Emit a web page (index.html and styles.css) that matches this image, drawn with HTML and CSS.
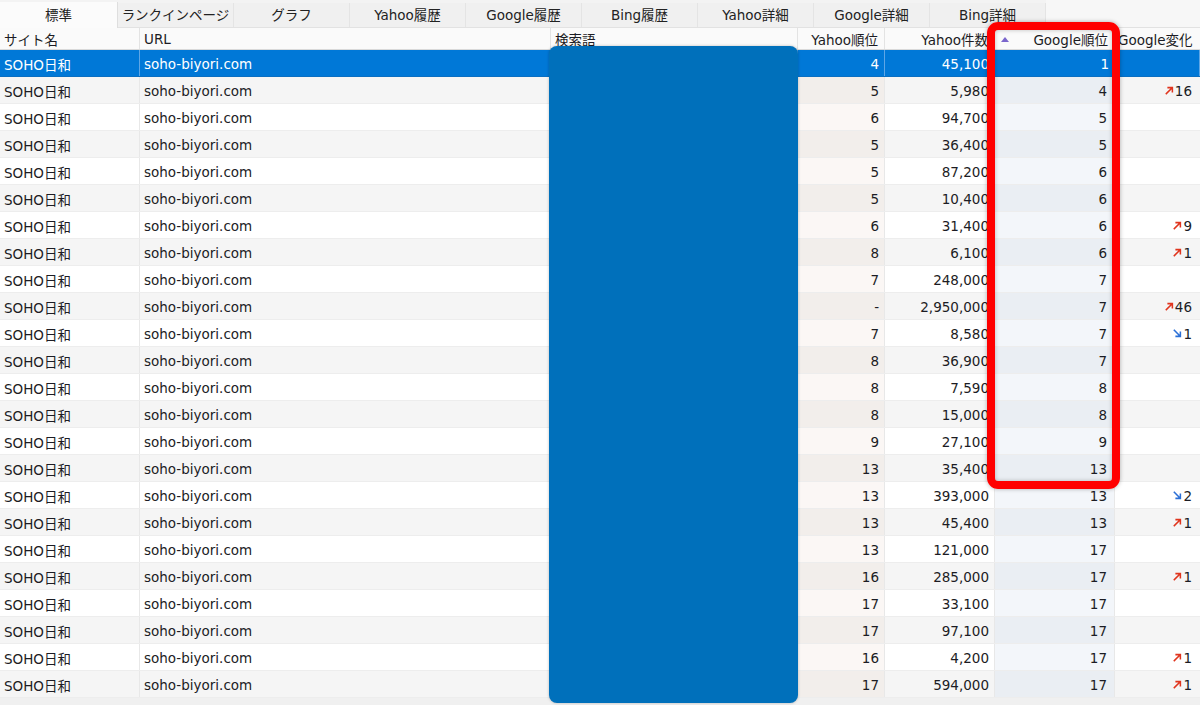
FILE: index.html
```html
<!DOCTYPE html>
<html lang="ja">
<head>
<meta charset="utf-8">
<title>ランキング</title>
<link rel="stylesheet" href="styles.css">
</head>
<body>
<div class="app">
  <div class="tabs">
    <div class="tab active">標準</div>
    <div class="tab">ランクインページ</div>
    <div class="tab">グラフ</div>
    <div class="tab">Yahoo履歴</div>
    <div class="tab">Google履歴</div>
    <div class="tab">Bing履歴</div>
    <div class="tab">Yahoo詳細</div>
    <div class="tab">Google詳細</div>
    <div class="tab">Bing詳細</div>
    <div class="tab-rest"></div>
  </div>
  <div class="grid">
    <div class="row head">
      <div class="c">サイト名</div>
      <div class="c">URL</div>
      <div class="c">検索語</div>
      <div class="c r">Yahoo順位</div>
      <div class="c r">Yahoo件数</div>
      <div class="c r sort"><span class="tri"></span><span>Google順位</span></div>
      <div class="c">Google変化</div>
    </div>
    <div class="row sel"><div class="c">SOHO日和</div><div class="c">soho-biyori.com</div><div class="c"></div><div class="c r">4</div><div class="c r">45,100</div><div class="c r">1</div><div class="c r"></div></div>
    <div class="row odd"><div class="c">SOHO日和</div><div class="c">soho-biyori.com</div><div class="c"></div><div class="c r y">5</div><div class="c r">5,980</div><div class="c r g">4</div><div class="c r"><span class="ch up"><svg viewBox="0 0 10 10"><path d="M1.5 8.5 L8 2 M3.5 1.8 H8.2 V6.5" /></svg>16</span></div></div>
    <div class="row"><div class="c">SOHO日和</div><div class="c">soho-biyori.com</div><div class="c"></div><div class="c r y">6</div><div class="c r">94,700</div><div class="c r g">5</div><div class="c r"></div></div>
    <div class="row odd"><div class="c">SOHO日和</div><div class="c">soho-biyori.com</div><div class="c"></div><div class="c r y">5</div><div class="c r">36,400</div><div class="c r g">5</div><div class="c r"></div></div>
    <div class="row"><div class="c">SOHO日和</div><div class="c">soho-biyori.com</div><div class="c"></div><div class="c r y">5</div><div class="c r">87,200</div><div class="c r g">6</div><div class="c r"></div></div>
    <div class="row odd"><div class="c">SOHO日和</div><div class="c">soho-biyori.com</div><div class="c"></div><div class="c r y">5</div><div class="c r">10,400</div><div class="c r g">6</div><div class="c r"></div></div>
    <div class="row"><div class="c">SOHO日和</div><div class="c">soho-biyori.com</div><div class="c"></div><div class="c r y">6</div><div class="c r">31,400</div><div class="c r g">6</div><div class="c r"><span class="ch up"><svg viewBox="0 0 10 10"><path d="M1.5 8.5 L8 2 M3.5 1.8 H8.2 V6.5" /></svg>9</span></div></div>
    <div class="row odd"><div class="c">SOHO日和</div><div class="c">soho-biyori.com</div><div class="c"></div><div class="c r y">8</div><div class="c r">6,100</div><div class="c r g">6</div><div class="c r"><span class="ch up"><svg viewBox="0 0 10 10"><path d="M1.5 8.5 L8 2 M3.5 1.8 H8.2 V6.5" /></svg>1</span></div></div>
    <div class="row"><div class="c">SOHO日和</div><div class="c">soho-biyori.com</div><div class="c"></div><div class="c r y">7</div><div class="c r">248,000</div><div class="c r g">7</div><div class="c r"></div></div>
    <div class="row odd"><div class="c">SOHO日和</div><div class="c">soho-biyori.com</div><div class="c"></div><div class="c r y">-</div><div class="c r">2,950,000</div><div class="c r g">7</div><div class="c r"><span class="ch up"><svg viewBox="0 0 10 10"><path d="M1.5 8.5 L8 2 M3.5 1.8 H8.2 V6.5" /></svg>46</span></div></div>
    <div class="row"><div class="c">SOHO日和</div><div class="c">soho-biyori.com</div><div class="c"></div><div class="c r y">7</div><div class="c r">8,580</div><div class="c r g">7</div><div class="c r"><span class="ch down"><svg viewBox="0 0 10 10"><path d="M1.5 1.5 L8 8 M8.2 3.5 V8.2 H3.5" /></svg>1</span></div></div>
    <div class="row odd"><div class="c">SOHO日和</div><div class="c">soho-biyori.com</div><div class="c"></div><div class="c r y">8</div><div class="c r">36,900</div><div class="c r g">7</div><div class="c r"></div></div>
    <div class="row"><div class="c">SOHO日和</div><div class="c">soho-biyori.com</div><div class="c"></div><div class="c r y">8</div><div class="c r">7,590</div><div class="c r g">8</div><div class="c r"></div></div>
    <div class="row odd"><div class="c">SOHO日和</div><div class="c">soho-biyori.com</div><div class="c"></div><div class="c r y">8</div><div class="c r">15,000</div><div class="c r g">8</div><div class="c r"></div></div>
    <div class="row"><div class="c">SOHO日和</div><div class="c">soho-biyori.com</div><div class="c"></div><div class="c r y">9</div><div class="c r">27,100</div><div class="c r g">9</div><div class="c r"></div></div>
    <div class="row odd"><div class="c">SOHO日和</div><div class="c">soho-biyori.com</div><div class="c"></div><div class="c r y">13</div><div class="c r">35,400</div><div class="c r g">13</div><div class="c r"></div></div>
    <div class="row"><div class="c">SOHO日和</div><div class="c">soho-biyori.com</div><div class="c"></div><div class="c r y">13</div><div class="c r">393,000</div><div class="c r g">13</div><div class="c r"><span class="ch down"><svg viewBox="0 0 10 10"><path d="M1.5 1.5 L8 8 M8.2 3.5 V8.2 H3.5" /></svg>2</span></div></div>
    <div class="row odd"><div class="c">SOHO日和</div><div class="c">soho-biyori.com</div><div class="c"></div><div class="c r y">13</div><div class="c r">45,400</div><div class="c r g">13</div><div class="c r"><span class="ch up"><svg viewBox="0 0 10 10"><path d="M1.5 8.5 L8 2 M3.5 1.8 H8.2 V6.5" /></svg>1</span></div></div>
    <div class="row"><div class="c">SOHO日和</div><div class="c">soho-biyori.com</div><div class="c"></div><div class="c r y">13</div><div class="c r">121,000</div><div class="c r g">17</div><div class="c r"></div></div>
    <div class="row odd"><div class="c">SOHO日和</div><div class="c">soho-biyori.com</div><div class="c"></div><div class="c r y">16</div><div class="c r">285,000</div><div class="c r g">17</div><div class="c r"><span class="ch up"><svg viewBox="0 0 10 10"><path d="M1.5 8.5 L8 2 M3.5 1.8 H8.2 V6.5" /></svg>1</span></div></div>
    <div class="row"><div class="c">SOHO日和</div><div class="c">soho-biyori.com</div><div class="c"></div><div class="c r y">17</div><div class="c r">33,100</div><div class="c r g">17</div><div class="c r"></div></div>
    <div class="row odd"><div class="c">SOHO日和</div><div class="c">soho-biyori.com</div><div class="c"></div><div class="c r y">17</div><div class="c r">97,100</div><div class="c r g">17</div><div class="c r"></div></div>
    <div class="row"><div class="c">SOHO日和</div><div class="c">soho-biyori.com</div><div class="c"></div><div class="c r y">16</div><div class="c r">4,200</div><div class="c r g">17</div><div class="c r"><span class="ch up"><svg viewBox="0 0 10 10"><path d="M1.5 8.5 L8 2 M3.5 1.8 H8.2 V6.5" /></svg>1</span></div></div>
    <div class="row odd"><div class="c">SOHO日和</div><div class="c">soho-biyori.com</div><div class="c"></div><div class="c r y">17</div><div class="c r">594,000</div><div class="c r g">17</div><div class="c r"><span class="ch up"><svg viewBox="0 0 10 10"><path d="M1.5 8.5 L8 2 M3.5 1.8 H8.2 V6.5" /></svg>1</span></div></div>
  </div>
  <div class="redact"></div>
  <div class="highlight"></div>
</div>
</body>
</html>
```

FILE: styles.css
```css
html, body {
  margin: 0;
  padding: 0;
  background: #f0f0f0;
}
.app {
  position: relative;
  width: 1200px;
  height: 705px;
  overflow: hidden;
  background: #f0f0f0;
  font-family: "DejaVu Sans", "Noto Sans CJK JP", sans-serif;
  font-size: 13.5px;
  color: #1c1c24;
}
.tabs {
  display: flex;
  height: 28px;
  box-sizing: border-box;
  background: #f3f3f3;
  border-bottom: 1px solid #e2e2e2;
}
.tab {
  width: 116px;
  flex: none;
  box-sizing: border-box;
  margin-top: 3px;
  padding-bottom: 3px;
  border-right: 1px solid #e4e4e4;
  background: #f0f0f0;
  display: flex;
  align-items: center;
  justify-content: center;
  font-size: 13.5px;
  color: #222;
}
.tab.active {
  width: 118px;
  margin-top: 2px;
  padding-bottom: 2px;
  background: #fbfbfb;
  border-right: 1px solid #dedede;
  margin-bottom: -1px;
}
.tab-rest {
  flex: 1;
  background: #f7f7f7;
}
.grid {
  background: #fff;
}
.row {
  display: grid;
  grid-template-columns: 140px 411px 247px 87px 110px 120px 85px;
  height: 27px;
  box-sizing: border-box;
  border-bottom: 1px solid #ededed;
  background: #fff;
}
.row.odd {
  background: #f5f5f5;
}
.row.head {
  height: 22px;
  background: #fafafa;
  border-bottom: 1px solid #d9d9d9;
}
.c {
  display: flex;
  align-items: center;
  padding: 1px 4px 0;
  border-right: 1px solid #e8e8e8;
  white-space: nowrap;
  overflow: hidden;
  min-width: 0;
}
.c.r {
  justify-content: flex-end;
  padding-right: 5px;
}
.row > .c:last-child {
  border-right: none;
  padding-right: 8px;
}
.head .c {
  border-right: 1px solid #e3e3e3;
  padding-top: 1px;
}
.head .c.r {
  padding-right: 6px;
}
.head .c.sort {
  justify-content: space-between;
  padding-left: 6px;
  padding-right: 6px;
}
.head > .c:last-child {
  padding-left: 3px;
}
.tri {
  width: 0;
  height: 0;
  border-left: 4px solid transparent;
  border-right: 4px solid transparent;
  border-bottom: 5px solid #7a66cc;
}
.row .y {
  background: #fbf7f5;
}
.row.odd .y {
  background: #f2eeeb;
}
.row .g {
  padding-right: 7px;
  background: #f3f6fa;
}
.row.odd .g {
  background: #eaeef3;
}
.row.sel {
  background: #0078d7;
  color: #fff;
  border-bottom: 1px solid #0a6fc2;
}
.row.sel .c {
  border-right: 1px solid #5ea6e6;
}
.ch {
  display: inline-flex;
  align-items: center;
  gap: 1px;
}
.ch svg {
  width: 9px;
  height: 9px;
  fill: none;
  stroke-width: 1.7;
  stroke-linecap: square;
}
.ch.up svg {
  stroke: #e0351e;
}
.ch.down svg {
  stroke: #2b6fd6;
}
.redact {
  position: absolute;
  left: 549px;
  top: 46px;
  width: 249px;
  height: 657px;
  background: #0070bb;
  border-radius: 8px;
  box-shadow: 0 0 3px rgba(0, 0, 0, 0.25);
}
.highlight {
  position: absolute;
  left: 987px;
  top: 22px;
  width: 133px;
  height: 467px;
  box-sizing: border-box;
  border: 8px solid #ff0000;
  border-radius: 11px;
  box-shadow: 0 0 4px rgba(0, 0, 0, 0.3), inset 0 0 4px rgba(0, 0, 0, 0.25);
}
```
